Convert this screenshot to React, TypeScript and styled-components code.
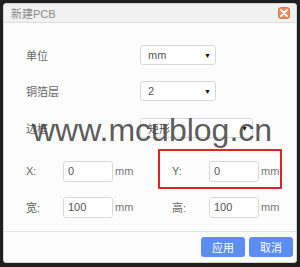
import React from "react";
import styled, { createGlobalStyle } from "styled-components";

const Global = createGlobalStyle`
  html, body { margin: 0; padding: 0; }
  body {
    background: #1f1f1f;
    font-family: "Liberation Sans", "Noto Sans CJK SC", sans-serif;
    width: 300px;
    height: 267px;
    overflow: hidden;
  }
`;

const Stage = styled.div`
  position: relative;
  width: 300px;
  height: 267px;
  padding: 3px;
  box-sizing: border-box;
`;

const Dialog = styled.div`
  width: 294px;
  height: 260px;
  background: #fcfcfc;
  border: 1px solid #d4d4d4;
  border-radius: 3px;
  box-sizing: border-box;
  display: flex;
  flex-direction: column;
  overflow: hidden;
`;

const TitleBar = styled.div`
  height: 18px;
  flex: none;
  background: #f1f1f1;
  border-bottom: 1px solid #dedede;
  display: flex;
  align-items: center;
  justify-content: space-between;
  padding: 0 6px 0 7px;
`;

const Title = styled.span`
  font-size: 11px;
  color: #8a8a8a;
`;

const Close = styled.div`
  width: 12px;
  height: 12px;
  border-radius: 3px;
  background: #ec8a5e;
  border: 1px solid #d97a50;
  box-sizing: border-box;
  display: flex;
  align-items: center;
  justify-content: center;
`;

const Body = styled.div`
  flex: 1;
  display: flex;
  flex-direction: column;
  padding: 22px 0 0 22px;
`;

const Row = styled.div<{ $gap: number }>`
  display: flex;
  align-items: center;
  height: 20px;
  margin-top: ${(p) => p.$gap}px;
`;

const Label = styled.span<{ $w: number }>`
  width: ${(p) => p.$w}px;
  flex: none;
  font-size: 11px;
  color: #666;
`;

const Select = styled.div<{ $w: number }>`
  width: ${(p) => p.$w}px;
  height: 20px;
  box-sizing: border-box;
  border: 1px solid #d8d8d8;
  border-radius: 3px;
  background: #fff;
  display: flex;
  align-items: center;
  justify-content: space-between;
  padding: 0 4px 0 7px;
  font-size: 11px;
  color: #555;
`;

const Arrow = styled.span`
  font-size: 7px;
  color: #111;
`;

const Input = styled.div`
  width: 50px;
  height: 21px;
  box-sizing: border-box;
  border: 1px solid #d8d8d8;
  border-radius: 3px;
  background: #fff;
  display: flex;
  align-items: center;
  padding-left: 4px;
  font-size: 11px;
  color: #555;
  flex: none;
`;

const Unit = styled.span<{ $w: number }>`
  width: ${(p) => p.$w}px;
  flex: none;
  padding-left: 2px;
  box-sizing: border-box;
  font-size: 11px;
  color: #777;
`;

const Footer = styled.div`
  flex: none;
  height: 29px;
  border-top: 1px solid #e6e6e6;
  display: flex;
  align-items: center;
  justify-content: flex-end;
  gap: 4px;
  padding-right: 3px;
  padding-bottom: 1px;
`;

const Button = styled.div`
  width: 44px;
  height: 20px;
  border-radius: 3px;
  background: #5b8ef2;
  color: #fff;
  font-size: 11px;
  display: flex;
  align-items: center;
  justify-content: center;
`;

const Watermark = styled.div`
  position: absolute;
  left: 32px;
  top: 112px;
  font-family: "Liberation Sans", Arial, sans-serif;
  font-size: 32px;
  color: rgba(70, 70, 70, 0.9);
  pointer-events: none;
`;

const Highlight = styled.div`
  position: absolute;
  left: 158px;
  top: 149px;
  width: 124px;
  height: 40px;
  border: 2px solid #e02424;
  box-sizing: border-box;
  border-radius: 1px;
`;

export default function App() {
  return (
    <>
      <Global />
      <Stage>
        <Dialog>
          <TitleBar>
            <Title>新建PCB</Title>
            <Close>
              <svg width="8" height="8" viewBox="0 0 8 8">
                <path d="M1 1L7 7M7 1L1 7" stroke="#fff" strokeWidth="1.8" strokeLinecap="round" />
              </svg>
            </Close>
          </TitleBar>
          <Body>
            <Row $gap={0}>
              <Label $w={114}>单位</Label>
              <Select $w={76}>
                mm<Arrow>▼</Arrow>
              </Select>
            </Row>
            <Row $gap={16}>
              <Label $w={114}>铜箔层</Label>
              <Select $w={76}>
                2<Arrow>▼</Arrow>
              </Select>
            </Row>
            <Row $gap={17}>
              <Label $w={114}>边框</Label>
              <Select $w={113}>
                矩形<Arrow>▼</Arrow>
              </Select>
            </Row>
            <Row $gap={23}>
              <Label $w={37}>X:</Label>
              <Input>0</Input>
              <Unit $w={59}>mm</Unit>
              <Label $w={37}>Y:</Label>
              <Input>0</Input>
              <Unit $w={24}>mm</Unit>
            </Row>
            <Row $gap={16}>
              <Label $w={37}>宽:</Label>
              <Input>100</Input>
              <Unit $w={59}>mm</Unit>
              <Label $w={37}>高:</Label>
              <Input>100</Input>
              <Unit $w={24}>mm</Unit>
            </Row>
          </Body>
          <Footer>
            <Button>应用</Button>
            <Button>取消</Button>
          </Footer>
        </Dialog>
        <Watermark>www.mcublog.cn</Watermark>
        <Highlight />
      </Stage>
    </>
  );
}
